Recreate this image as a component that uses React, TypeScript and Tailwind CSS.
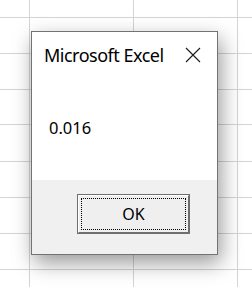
import React from "react";

const rowHeights = ["h-[18px]", "h-[36px]", "h-[36px]", "h-[35px]", "h-[37px]", "h-[36px]", "h-[36px]", "h-[36px]", "h-[36px]"];

function SheetRow({ h }: { h: string }) {
  return (
    <div className={`flex ${h} border-b border-[#d4d4d4]`}>
      <div className="w-[30px] border-r border-[#d4d4d4]" />
      <div className="w-[104px] border-r border-[#d4d4d4]" />
      <div className="w-[104px] border-r border-[#d4d4d4]" />
      <div className="flex-1" />
    </div>
  );
}

function CloseIcon() {
  return (
    <svg width="16" height="16" viewBox="0 0 16 16" className="block">
      <path d="M1 1 L15 15 M15 1 L1 15" stroke="#1a1a1a" strokeWidth="1.1" fill="none" />
    </svg>
  );
}

export default function App() {
  return (
    <div className="relative w-[252px] h-[287px] overflow-hidden bg-white font-['Noto_Sans',sans-serif]">
      {/* Spreadsheet grid behind the dialog */}
      <div className="flex flex-col">
        {rowHeights.map((h, i) => (
          <SheetRow key={i} h={h} />
        ))}
      </div>

      {/* Message box */}
      <div className="absolute left-[31px] top-[31px] w-[187px] h-[224px] flex flex-col border border-[#737373] bg-white shadow-[3px_8px_20px_rgba(0,0,0,0.4)]">
        <div className="flex-1 flex flex-col">
          <div className="flex items-center justify-between pl-[12px] pr-[16px] pt-[11px]">
            <span className="text-[18px] leading-[24px] text-black tracking-[-0.5px]">Microsoft Excel</span>
            <CloseIcon />
          </div>
          <div className="pl-[17px] pt-[50px] text-[16.5px] leading-[22px] text-black">0.016</div>
        </div>
        <div className="h-[74px] bg-[#f0f0f0] flex justify-end pr-[27px] pt-[14px]">
          <div className="w-[113px] h-[40px] border border-[#6e6e6e]">
            <div className="h-full border-t border-l border-white border-r border-b border-r-[#6e6e6e] border-b-[#6e6e6e] bg-[#efefef] p-[2px]">
              <div className="h-full border border-dotted border-black flex items-center justify-center text-[16px] text-black">
                OK
              </div>
            </div>
          </div>
        </div>
      </div>
    </div>
  );
}
